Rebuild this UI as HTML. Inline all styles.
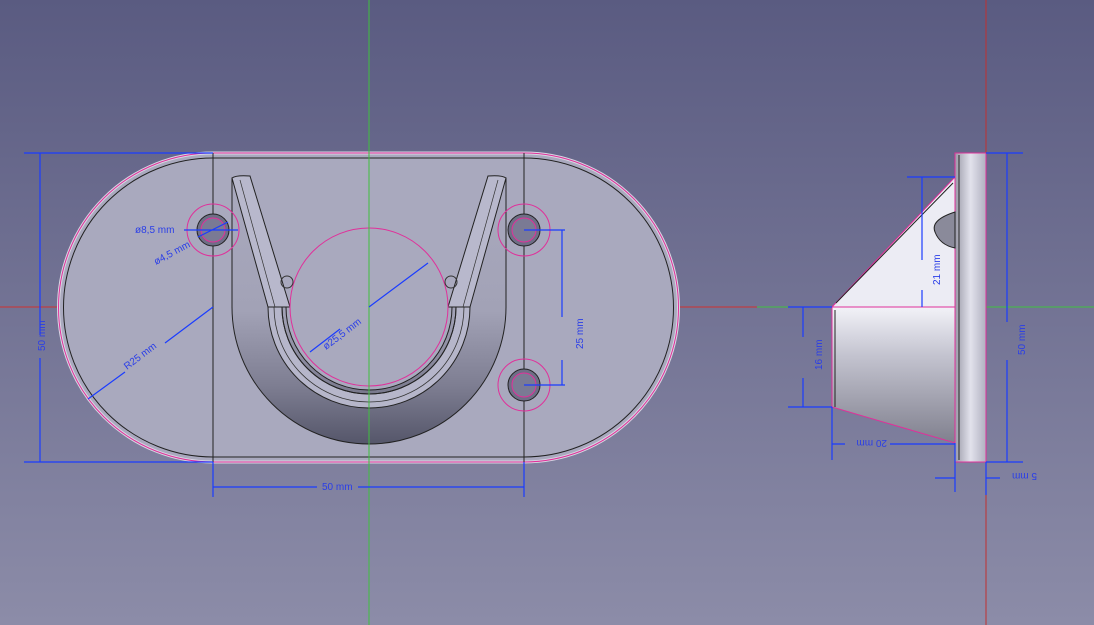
<!DOCTYPE html>
<html><head><meta charset="utf-8"><style>
html,body{margin:0;padding:0;width:1094px;height:625px;overflow:hidden;background:linear-gradient(#5a5b81,#8c8ca8);}
svg{display:block}
text{font-family:"Liberation Sans",sans-serif;font-size:10px;fill:#2a3ee8}
</style></head><body>
<svg width="1094" height="625" viewBox="0 0 1094 625">
<defs>
<linearGradient id="pocket" x1="0" y1="0" x2="0" y2="1">
<stop offset="0" stop-color="#a9a9be"/><stop offset="0.5" stop-color="#a2a2b6"/><stop offset="0.78" stop-color="#7e7e92"/><stop offset="1" stop-color="#55566a"/></linearGradient>
<linearGradient id="cone" x1="0" y1="0" x2="0" y2="1">
<stop offset="0" stop-color="#f2f2f8"/><stop offset="0.35" stop-color="#c4c4d0"/><stop offset="1" stop-color="#80808e"/></linearGradient>
<linearGradient id="fl" x1="0" y1="0" x2="1" y2="0">
<stop offset="0" stop-color="#9a9aa8"/><stop offset="0.5" stop-color="#e2e2ec"/><stop offset="1" stop-color="#b0b0c0"/></linearGradient>
</defs>
<line x1="0" y1="307" x2="757" y2="307" stroke="#d03030" stroke-width="1"/>
<line x1="757" y1="307" x2="1094" y2="307" stroke="#3fc03f" stroke-width="1"/>
<line x1="986" y1="0" x2="986" y2="625" stroke="#c03030" stroke-width="1"/>
<!-- plate -->
<path d="M213 153 H524 A154.5 154.5 0 0 1 524 462 H213 A154.5 154.5 0 0 1 213 153 Z" fill="#a9a9be" stroke="#d8d8e4" stroke-width="3"/>
<path d="M213 158 H524 A149.5 149.5 0 0 1 524 457 H213 A149.5 149.5 0 0 1 213 158 Z" fill="#a9a9be" stroke="#222" stroke-width="1"/>
<path d="M213 153 H524 A154.5 154.5 0 0 1 524 462 H213 A154.5 154.5 0 0 1 213 153 Z" fill="none" stroke="#e0309a" stroke-width="1"/>
<line x1="213" y1="153" x2="213" y2="462" stroke="#222"/>
<line x1="524" y1="153" x2="524" y2="462" stroke="#222"/>
<!-- U pocket -->
<path d="M232 178 L232 307 A137 137 0 0 0 506 307 L506 178 L490 178 L452 307 A83 83 0 0 1 286 307 L250 178 Z" fill="url(#pocket)" stroke="#222"/>
<path d="M268 307 A101 101 0 0 0 470 307 L456 307 A87 87 0 0 1 282 307 Z" fill="#b6b6ca" stroke="#222"/>
<path d="M274 307 A95 95 0 0 0 464 307" fill="none" stroke="#333" stroke-width="0.8"/>
<path d="M232 178 Q236 175 250 176 L290 307 L268 307 Z" fill="#b8b8cc" stroke="#222"/>
<path d="M240 180 L275 307" stroke="#333" stroke-width="0.7"/>
<path d="M506 178 Q502 175 488 176 L448 307 L470 307 Z" fill="#b8b8cc" stroke="#222"/>
<path d="M498 180 L463 307" stroke="#333" stroke-width="0.7"/>
<circle cx="369" cy="307" r="79" fill="#a9a9be" stroke="#e0309a"/>
<path d="M282 307 A87 87 0 0 0 456 307" fill="none" stroke="#222"/>
<circle cx="287" cy="282" r="6" fill="none" stroke="#333"/>
<circle cx="451" cy="282" r="6" fill="none" stroke="#333"/>
<line x1="369" y1="0" x2="369" y2="625" stroke="#3fc03f" stroke-width="1"/>
<!-- holes -->
<g stroke="#e0309a" fill="none">
<circle cx="213" cy="230" r="26"/><circle cx="524" cy="230" r="26"/><circle cx="524" cy="385" r="26"/>
</g>
<g fill="#6e6e86" stroke="#222">
<circle cx="213" cy="230" r="16"/><circle cx="524" cy="230" r="16"/><circle cx="524" cy="385" r="16"/>
</g>
<g fill="#7a7a94" stroke="#e0309a">
<circle cx="213" cy="230" r="12"/><circle cx="524" cy="230" r="12"/><circle cx="524" cy="385" r="12"/>
</g>
<g stroke="#1a3cff" stroke-width="1.2" fill="none">
<path d="M24 153 H213 M24 462 H213 M40 153 V335 M40 358 V462"/>
<path d="M213 462 V497 M524 462 V497 M213 487 H317 M358 487 H524"/>
<path d="M524 230 H565 M524 385 H565 M562 230 V317 M562 360 V385"/>
<path d="M213 307 L165 343 M125 372 L88 399"/>
<path d="M369 307 L428 263 M340 329 L310 352"/>
<path d="M184 230 H238 M198 237 L228 222"/>
</g>
<text x="36" y="352" transform="rotate(-90 40 347)">50 mm</text>
<text x="322" y="490">50 mm</text>
<text x="557" y="357" transform="rotate(-90 566 340)">25 mm</text>
<text x="127" y="370" transform="rotate(-37 127 370)">R25 mm</text>
<text x="326" y="350" transform="rotate(-37 326 350)">ø25,5 mm</text>
<text x="135" y="233">ø8,5 mm</text>
<text x="156" y="265" transform="rotate(-28 156 265)">ø4,5 mm</text>
<!-- side view -->
<rect x="955" y="153" width="31" height="309" fill="url(#fl)" stroke="#e0309a"/>
<line x1="959" y1="155" x2="959" y2="460" stroke="#222"/>
<path d="M832 307 L955 177 L955 307 Z" fill="#ececf4" stroke="#e0309a"/>
<path d="M836 303 L953 183" stroke="#222"/>
<path d="M955 212 Q930 220 935 232 Q940 245 955 248 Z" fill="#8a8a9a" stroke="#222"/>
<path d="M832 307 L955 307 L955 443 L832 407 Z" fill="url(#cone)" stroke="#e0309a"/>
<line x1="835" y1="310" x2="835" y2="407" stroke="#222"/>
<g stroke="#1a3cff" stroke-width="1.2" fill="none">
<path d="M986 153 H1023 M986 462 H1023 M1007 153 V322 M1007 360 V462"/>
<path d="M907 177 H955 M922 177 V260 M922 290 V307"/>
<path d="M788 307 H832 M788 407 H832 M803 307 V337 M803 378 V407"/>
<path d="M832 407 V460 M955 443 V492 M832 444 H845 M890 444 H955"/>
<path d="M935 478 H955 M986 462 V495 M986 478 H1000"/>
</g>
<text x="1000" y="360" transform="rotate(-90 1010 345)">50 mm</text>
<text x="915" y="290" transform="rotate(-90 925 275)">21 mm</text>
<text x="797" y="375" transform="rotate(-90 807 360)">16 mm</text>
<text x="847" y="448" transform="rotate(180 867 444)">20 mm</text>
<text x="1003" y="481" transform="rotate(180 1020 477)">5 mm</text>
</svg>
</body></html>
